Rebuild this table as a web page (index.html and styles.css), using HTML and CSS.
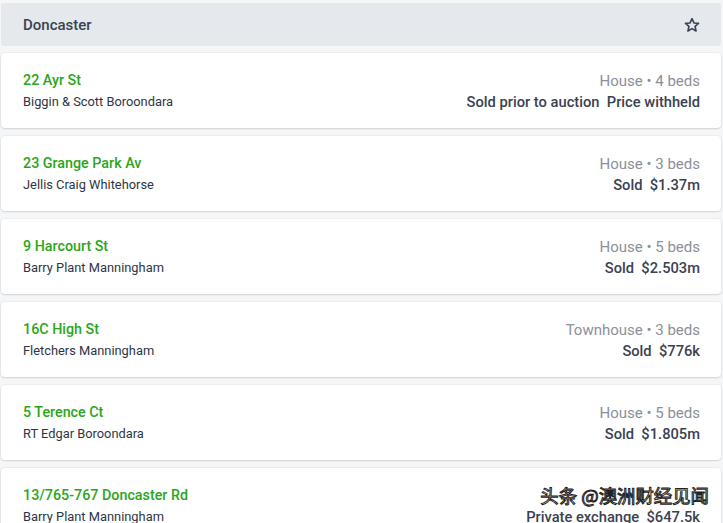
FILE: index.html
```html
<!DOCTYPE html>
<html>
<head>
<meta charset="utf-8">
<link rel="stylesheet" href="styles.css">
</head>
<body>
<div class="page">
  <div class="header">
    <span class="suburb">Doncaster</span>
    <svg class="star" width="16" height="16" viewBox="0 0 24 24" fill="none" stroke="#3a4252" stroke-width="2.4" stroke-linejoin="round"><polygon points="12,2.5 14.9,8.9 21.8,9.6 16.6,14.2 18.1,21 12,17.5 5.9,21 7.4,14.2 2.2,9.6 9.1,8.9"/></svg>
  </div>
  <div class="list">
    <div class="card">
      <div class="left"><div class="addr">22 Ayr St</div><div class="agent">Biggin &amp; Scott Boroondara</div></div>
      <div class="right"><div class="type">House • 4 beds</div><div class="price">Sold prior to auction&nbsp; Price withheld</div></div>
    </div>
    <div class="card">
      <div class="left"><div class="addr">23 Grange Park Av</div><div class="agent">Jellis Craig Whitehorse</div></div>
      <div class="right"><div class="type">House • 3 beds</div><div class="price">Sold&nbsp; $1.37m</div></div>
    </div>
    <div class="card">
      <div class="left"><div class="addr">9 Harcourt St</div><div class="agent">Barry Plant Manningham</div></div>
      <div class="right"><div class="type">House • 5 beds</div><div class="price">Sold&nbsp; $2.503m</div></div>
    </div>
    <div class="card">
      <div class="left"><div class="addr">16C High St</div><div class="agent">Fletchers Manningham</div></div>
      <div class="right"><div class="type">Townhouse • 3 beds</div><div class="price">Sold&nbsp; $776k</div></div>
    </div>
    <div class="card">
      <div class="left"><div class="addr">5 Terence Ct</div><div class="agent">RT Edgar Boroondara</div></div>
      <div class="right"><div class="type">House • 5 beds</div><div class="price">Sold&nbsp; $1.805m</div></div>
    </div>
    <div class="card">
      <div class="left"><div class="addr">13/765-767 Doncaster Rd</div><div class="agent">Barry Plant Manningham</div></div>
      <div class="right"><div class="type">&nbsp;</div><div class="price">Private exchange&nbsp; $647.5k</div></div>
    </div>
  </div>
  <div class="watermark">头条 @澳洲财经见闻</div>
</div>
</body>
</html>
```
FILE: styles.css
```css
html, body {
  margin: 0;
  padding: 0;
  background: #f5f6f8;
  overflow: hidden;
}
.page {
  position: relative;
  width: 723px;
  height: 523px;
  padding: 3px 2px 0 1px;
  box-sizing: border-box;
  font-family: Roboto, "Noto Sans", sans-serif;
  overflow: hidden;
}
.header {
  height: 43px;
  background: #e5e8ed;
  display: flex;
  align-items: center;
  justify-content: space-between;
  padding: 0 21px 0 22px;
  border-radius: 2px;
}
.suburb {
  font-size: 15px;
  font-weight: 500;
  color: #3a4252;
}
.star { display: block; }
.list {
  display: flex;
  flex-direction: column;
  gap: 8px;
  margin-top: 7px;
}
.card {
  flex: none;
  height: 75px;
  background: #fff;
  border-radius: 4px;
  box-shadow: 0 1px 2px rgba(0,0,0,0.12), 0 0 0 1px rgba(0,0,0,0.03);
  display: flex;
  justify-content: space-between;
  align-items: center;
  padding: 0 21px 0 22px;
  box-sizing: border-box;
}
.left, .right {
  display: flex;
  flex-direction: column;
  gap: 4px;
}
.right {
  align-items: flex-end;
  padding-top: 2px;
}
.addr {
  font-size: 14.3px;
  font-weight: 500;
  color: #2ba61c;
  line-height: 17px;
}
.agent {
  font-size: 12.85px;
  color: #2d3545;
  line-height: 17px;
}
.type {
  font-size: 15px;
  color: #8b909b;
  line-height: 17px;
}
.price {
  font-size: 14.7px;
  font-weight: 500;
  color: #3a4252;
  line-height: 17px;
}
.watermark {
  position: absolute;
  right: 14px;
  bottom: 15px;
  font-family: "Noto Sans CJK SC", sans-serif;
  font-size: 18.4px;
  color: #fff;
  -webkit-text-stroke: 1px #222;
  letter-spacing: 0;
}
```
